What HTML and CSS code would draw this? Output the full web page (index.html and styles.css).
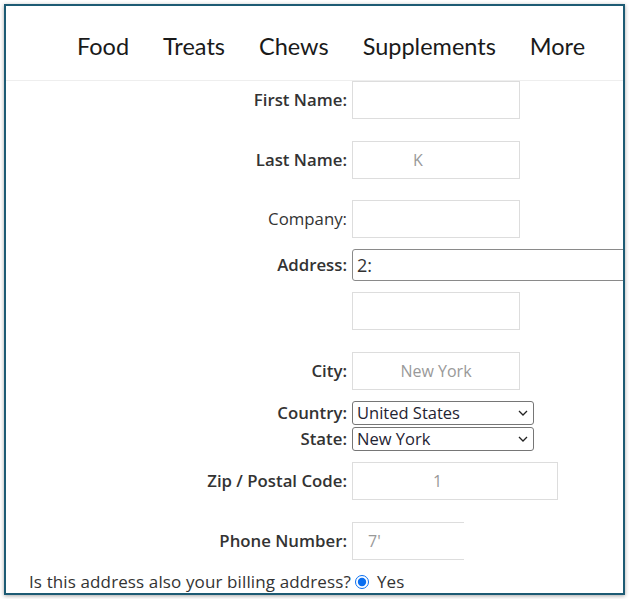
FILE: index.html
```html
<!DOCTYPE html>
<html lang="en">
<head>
<meta charset="utf-8">
<title>Shipping Address</title>
<link rel="stylesheet" href="styles.css">
</head>
<body>
<div class="frame">
  <nav class="nav">
    <a class="nav-item" href="#">Food</a>
    <a class="nav-item" href="#">Treats</a>
    <a class="nav-item" href="#">Chews</a>
    <a class="nav-item" href="#">Supplements</a>
    <a class="nav-item" href="#">More</a>
  </nav>
  <form class="form">
    <div class="row row-first">
      <label class="label" for="fn">First Name:</label>
      <input class="field field-short" id="fn" type="text" value="">
    </div>
    <div class="row row-gap">
      <label class="label" for="ln">Last Name:</label>
      <input class="field field-short pad-k muted" id="ln" type="text" value="K">
    </div>
    <div class="row row-gap-sm">
      <label class="label label-light" for="co">Company:</label>
      <input class="field field-short" id="co" type="text" value="">
    </div>
    <div class="row row-gap-xs">
      <label class="label" for="ad">Address:</label>
      <input class="field-address" id="ad" type="text" value="2:">
    </div>
    <div class="row row-gap-xs">
      <span class="label"></span>
      <input class="field field-short" type="text" value="">
    </div>
    <div class="row row-gap">
      <label class="label" for="ci">City:</label>
      <input class="field field-short centered muted" id="ci" type="text" value="New York">
    </div>
    <div class="row row-gap-xs">
      <label class="label" for="cn">Country:</label>
      <span class="select-wrap">
        <select class="select" id="cn"><option>United States</option></select>
        <svg class="chev" width="10" height="6" viewBox="0 0 10 6"><path d="M1 1 L5 5 L9 1" fill="none" stroke="#222" stroke-width="1.3"/></svg>
      </span>
    </div>
    <div class="row row-gap-tiny">
      <label class="label" for="st">State:</label>
      <span class="select-wrap">
        <select class="select" id="st"><option>New York</option></select>
        <svg class="chev" width="10" height="6" viewBox="0 0 10 6"><path d="M1 1 L5 5 L9 1" fill="none" stroke="#222" stroke-width="1.3"/></svg>
      </span>
    </div>
    <div class="row row-gap-xs">
      <label class="label" for="zp">Zip / Postal Code:</label>
      <input class="field field-zip pad-zip muted" id="zp" type="text" value="1">
    </div>
    <div class="row row-gap">
      <label class="label" for="ph">Phone Number:</label>
      <input class="field field-phone muted" id="ph" type="text" value="7'">
    </div>
    <div class="billing">
      <span class="billing-q">Is this address also your billing address?</span>
      <input class="radio" type="radio" id="by" name="billing" checked>
      <label class="billing-yes" for="by">Yes</label>
    </div>
  </form>
</div>
</body>
</html>
```

FILE: styles.css
```css
html, body {
  margin: 0;
  padding: 0;
  background: #ffffff;
}

body {
  width: 629px;
  height: 599px;
  overflow: hidden;
  font-family: "Open Sans", "Liberation Sans", sans-serif;
  color: #333333;
}

.frame {
  margin: 4px 0 0 4px;
  width: 617px;
  height: 587px;
  border: 2px solid #1d5b74;
  background: #ffffff;
  box-shadow: 0 1px 4px rgba(0, 0, 0, 0.35);
  overflow: hidden;
}

.nav {
  display: flex;
  gap: 34px;
  height: 75px;
  box-sizing: border-box;
  padding: 26px 0 0 71px;
  border-bottom: 1px solid #eeeeee;
}

.nav-item {
  font-family: "Lato", "Liberation Sans", sans-serif;
  font-size: 23.5px;
  color: #1a1a1a;
  text-decoration: none;
  line-height: 28px;
}

.form {
  display: flex;
  flex-direction: column;
}

.row {
  display: grid;
  grid-template-columns: 341px auto;
  column-gap: 5px;
  align-items: center;
  justify-content: start;
}

.row-first { margin-top: 0; }
.row-gap { margin-top: 22px; }
.row-gap-sm { margin-top: 21px; }
.row-gap-xs { margin-top: 11px; }
.row-gap-tiny { margin-top: 2px; }

.label {
  text-align: right;
  font-size: 16.8px;
  line-height: 22px;
  font-weight: 600;
  color: #333333;
}

.label-light {
  font-weight: 400;
}

.field {
  box-sizing: border-box;
  height: 38px;
  border: 1px solid #dddddd;
  border-radius: 0;
  padding: 0 15px;
  font-family: "Open Sans", "Liberation Sans", sans-serif;
  font-size: 16px;
  color: #555555;
  background: #ffffff;
  outline: none;
}

.field-short { width: 168px; }
.field-zip { width: 206px; }
.field-phone {
  width: 112px;
  border-right: none;
}

.centered { text-align: center; }
.muted { color: #999999; }
.pad-k { padding-left: 60px; }
.pad-zip { padding-left: 80px; }

.field-address {
  box-sizing: border-box;
  width: 300px;
  height: 32px;
  border: 1px solid #8a8a8a;
  border-radius: 3px;
  padding: 0 4px;
  font-family: "Open Sans", "Liberation Sans", sans-serif;
  font-size: 18px;
  color: #333333;
  background: #ffffff;
}

.select-wrap {
  position: relative;
  display: block;
  width: 182px;
  height: 24px;
}

.select {
  -webkit-appearance: none;
  appearance: none;
  display: block;
  box-sizing: border-box;
  width: 182px;
  height: 24px;
  margin: 0;
  border: 1px solid #767676;
  border-radius: 3px;
  padding: 0 4px;
  font-family: "Open Sans", "Liberation Sans", sans-serif;
  font-size: 16.5px;
  line-height: 22px;
  color: #1f2433;
  background: #ffffff;
}

.chev {
  position: absolute;
  right: 6px;
  top: 9px;
  pointer-events: none;
}

.billing {
  display: flex;
  align-items: center;
  margin-top: 10px;
  padding-left: 23px;
  font-size: 17px;
  letter-spacing: 0.12px;
  color: #333333;
}

.radio {
  width: 14px;
  height: 14px;
  margin: 0 8px 0 4px;
  accent-color: #0b6ff0;
}

.billing-yes {
  font-size: 17px;
}
```
